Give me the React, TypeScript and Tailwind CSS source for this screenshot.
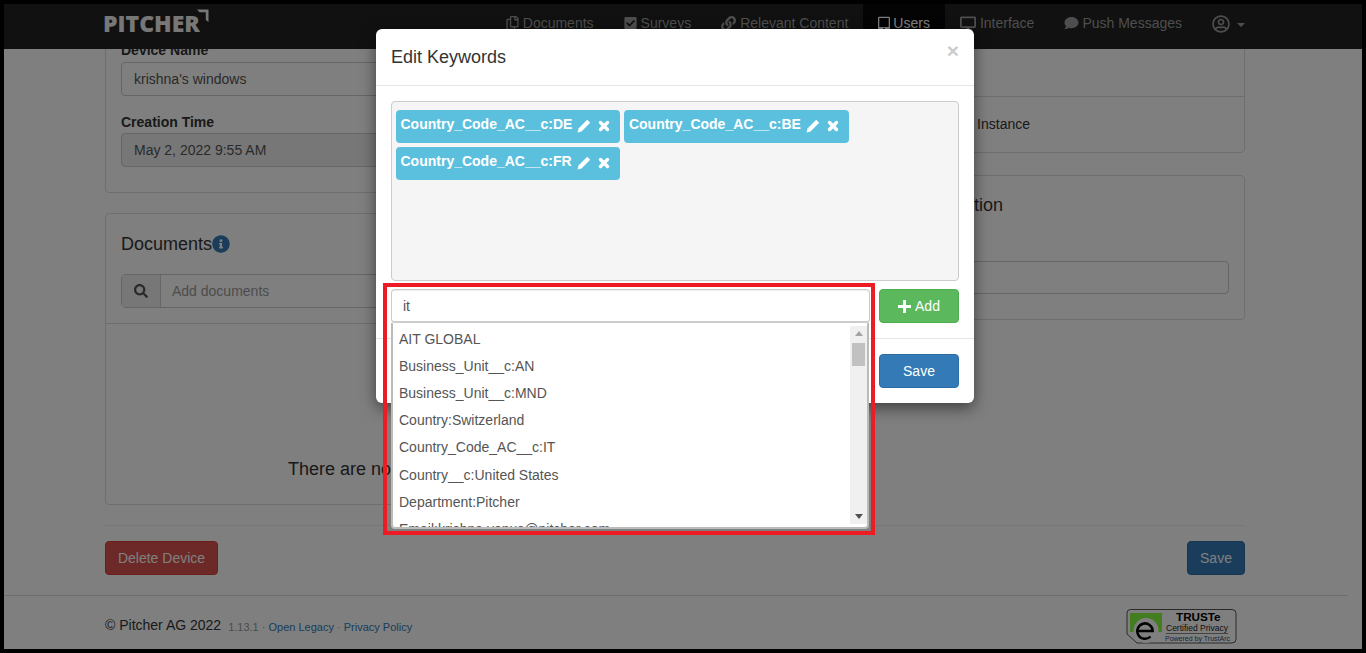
import {
  FaCheckSquare,
  FaComment,
  FaDesktop,
  FaInfoCircle,
  FaLink,
  FaRegCopy,
  FaRegUserCircle,
  FaSearch,
  FaTabletAlt,
} from "react-icons/fa";

const navItems = [
  { label: "Documents", icon: FaRegCopy, iconClass: "h-[14px] w-[13px]", gap: "gap-[4px]" },
  { label: "Surveys", icon: FaCheckSquare, iconClass: "h-[14px] w-[13px]", gap: "gap-[4px]" },
  { label: "Relevant Content", icon: FaLink, iconClass: "h-[15px] w-[15px]", gap: "gap-[4px]" },
  { label: "Users", icon: FaTabletAlt, iconClass: "h-[15px] w-[12px]", gap: "gap-[3px]", active: true },
  { label: "Interface", icon: FaDesktop, iconClass: "h-[15px] w-[16px]", gap: "gap-[4px]" },
  { label: "Push Messages", icon: FaComment, iconClass: "h-[14px] w-[15px]", gap: "gap-[3px]" },
];

const keywords = ["Country_Code_AC__c:DE", "Country_Code_AC__c:BE", "Country_Code_AC__c:FR"];

const suggestions = [
  "AIT GLOBAL",
  "Business_Unit__c:AN",
  "Business_Unit__c:MND",
  "Country:Switzerland",
  "Country_Code_AC__c:IT",
  "Country__c:United States",
  "Department:Pitcher",
  "Email:krishna.venus@pitcher.com",
];

function Logo() {
  return (
    <div className="relative h-[45px] w-[104px] shrink-0">
      <span className="absolute left-[-2px] top-[4px] text-[23px] leading-[30px] font-extrabold text-[#eeeeee] [font-family:'Open_Sans',sans-serif]">
        PITCHER
      </span>
      <svg className="absolute left-[92px] top-[5px]" width="12" height="14" viewBox="0 0 12 14">
        <path d="M0 0.5H11.5V13L8.8 11V3.2H2.5Z" fill="#eeeeee" />
      </svg>
    </div>
  );
}

function Navbar() {
  return (
    <nav className="relative z-10 flex h-[45px] shrink-0 items-center bg-[#222222] pl-[101px] pr-[117px] text-sm text-[#9d9d9d]">
      <Logo />
      <div className="ml-auto flex h-full items-center">
        {navItems.map((item) => (
          <a
            key={item.label}
            className={`flex h-full items-center px-[15px] pb-[7px] ${item.gap} ${item.active ? "bg-[#080808] text-white" : ""}`}
          >
            <item.icon className={item.iconClass} />
            <span>{item.label}</span>
          </a>
        ))}
        <a className="ml-[15px] flex items-center gap-[7px] pb-[5px]">
          <FaRegUserCircle className="h-[18px] w-[18px]" />
          <span className="mt-[2px] h-0 w-0 border-x-[4px] border-t-[4px] border-x-transparent border-t-[#9d9d9d]" />
        </a>
      </div>
    </nav>
  );
}

function Page() {
  return (
    <main className="flex h-[546px] shrink-0 flex-col overflow-hidden px-[101px] pr-[117px] text-sm text-[#333333]">
      <div className="-mt-[23px] grid grid-cols-2 gap-x-5">
        <div className="flex flex-col gap-[20px]">
          <section className="h-[167px] rounded border border-[#dddddd] px-[15px] pt-[13px]">
            <label className="block font-bold leading-5">Device Name</label>
            <div className="mt-[2px] flex h-[34px] items-center rounded border border-[#cccccc] px-3 text-[#555555]">
              krishna's windows
            </div>
            <label className="mt-4 block font-bold leading-5">Creation Time</label>
            <div className="mt-px flex h-[34px] items-center rounded border border-[#cccccc] bg-[#eeeeee] px-3 text-[#555555]">
              May 2, 2022 9:55 AM
            </div>
          </section>
          <section className="flex h-[292px] flex-col rounded border border-[#dddddd]">
            <div className="h-[110px] border-b border-[#dddddd] px-[15px] pt-[20px]">
              <h3 className="flex items-center text-lg leading-5">
                Documents
                <FaInfoCircle className="h-[18px] w-[18px] text-[#337ab7]" />
              </h3>
              <div className="mt-5 flex h-[34px] rounded border border-[#cccccc]">
                <span className="flex w-[39px] items-center justify-center border-r border-[#cccccc] bg-[#eeeeee] text-[#555555]">
                  <FaSearch className="h-[14px] w-[14px]" />
                </span>
                <span className="flex items-center px-[11px] text-[#999999]">Add documents</span>
              </div>
            </div>
            <div className="flex flex-1 items-end justify-center pb-[23px] pl-[2px] text-lg leading-6">
              There are no documents
            </div>
          </section>
        </div>
        <div className="flex flex-col gap-[22px]">
          <section className="h-[127px] rounded border border-[#dddddd]">
            <div className="h-[70px] border-b border-[#dddddd]" />
            <div className="flex h-[56px] items-center justify-end pb-[2px] pr-[214px]">Instance</div>
          </section>
          <section className="h-[145px] rounded border border-[#dddddd] px-[15px] pt-[19px]">
            <h3 className="text-right text-lg leading-5 whitespace-nowrap pr-[226px]">Configuration</h3>
            <div className="mt-[46px] h-[33px] rounded border border-[#cccccc]" />
          </section>
        </div>
      </div>
      <div className="mt-[20px] border-t border-[#eeeeee] pt-[15px]">
        <div className="flex justify-between">
          <button className="h-[34px] w-[113px] rounded border border-[#d43f3a] bg-[#d9534f] text-white">
            Delete Device
          </button>
          <button className="h-[34px] w-[58px] rounded border border-[#2e6da4] bg-[#337ab7] text-white">
            Save
          </button>
        </div>
      </div>
    </main>
  );
}

function TrustBadge() {
  return (
    <svg width="111" height="36" viewBox="0 0 111 36">
      <path
        d="M4.500 .5H106a4 4 0 0 1 4 4V30a4 4 0 0 1-4 4H11L1 25V4a3.500 3.500 0 0 1 3.500-3.500Z"
        fill="#ffffff"
        stroke="#555555"
      />
      <rect x="4" y="4" width="32" height="19" fill="#86fb3e" />
      <circle cx="20" cy="21.500" r="12.500" fill="#ffffff" />
      <path d="M11.500 22H26.700A7.700 7.700 0 1 0 24.500 27.500" fill="none" stroke="#000000" strokeWidth="2.500" />
      <text x="50" y="12" fontSize="11.700" fontWeight="700" fill="#000000" fontFamily="Liberation Sans, sans-serif">
        TRUSTe
      </text>
      <text x="40" y="21.500" fontSize="8.500" fill="#222222" fontFamily="Liberation Sans, sans-serif">
        Certified Privacy
      </text>
      <path d="M40 24.500H102" stroke="#888888" />
      <text x="39" y="32" fontSize="7" fill="#1d4f82" fontFamily="Liberation Sans, sans-serif">
        Powered by TrustArc
      </text>
    </svg>
  );
}

function Footer() {
  return (
    <footer className="mr-[14px] flex flex-1 items-start border-t border-[#dddddd] pl-[101px] pr-[111px]">
      <div className="mt-[19px] flex items-baseline text-sm leading-5 text-[#333333]">
        © Pitcher AG 2022
        <span className="ml-[7px] translate-y-px text-[11px] text-[#999999]">
          1.13.1 · <a className="text-[#337ab7]">Open Legacy</a> · <a className="text-[#337ab7]">Privacy Policy</a>
        </span>
      </div>
      <div className="mt-[13px] ml-auto">
        <TrustBadge />
      </div>
    </footer>
  );
}

function PencilIcon() {
  return (
    <svg width="14" height="14" viewBox="0 0 14 14" className="shrink-0">
      <path d="M10.200 .8L13.200 3.800L4.500 12.500L.6 13.400L1.500 9.500Z" fill="#ffffff" />
    </svg>
  );
}

function RemoveIcon() {
  return (
    <svg width="12" height="12" viewBox="0 0 12 12" className="shrink-0">
      <path d="M2.500 2.500L9.500 9.500M9.500 2.500L2.500 9.500" stroke="#ffffff" strokeWidth="3.400" strokeLinecap="round" />
    </svg>
  );
}

function KeywordChip({ text }: { text: string }) {
  return (
    <span className="flex h-[33px] items-center rounded bg-[#5bc0de] pb-[5px] pl-[4.500px] pr-[10px] text-sm font-bold text-white">
      {text}
      <span className="ml-[5px] mt-[4px] flex items-center gap-[7px]">
        <PencilIcon />
        <RemoveIcon />
      </span>
    </span>
  );
}

function SuggestionList() {
  return (
    <div className="absolute left-[15px] top-[294px] flex h-[206px] w-[478px] overflow-hidden rounded-b border-x-2 border-b-2 border-[#bbbbbb] bg-white text-sm text-[#555555]">
      <ul className="flex-1 overflow-hidden pt-[2px]">
        {suggestions.map((s) => (
          <li key={s} className="flex h-[27.2px] items-center pl-[6px] whitespace-nowrap">
            {s}
          </li>
        ))}
      </ul>
      <div className="relative my-[3px] flex w-[17px] shrink-0 flex-col items-center bg-[#f0f0f0]">
        <span className="mt-[5px] h-0 w-0 border-x-[4px] border-b-[5px] border-x-transparent border-b-[#a3a3a3]" />
        <span className="mt-[7px] h-[23px] w-[13px] bg-[#c1c1c1]" />
        <span className="mt-auto mb-[5px] h-0 w-0 border-x-[4px] border-t-[5px] border-x-transparent border-t-[#505050]" />
      </div>
    </div>
  );
}

function KeywordsModal() {
  return (
    <div className="absolute left-[376px] top-[29px] z-30 w-[598px] rounded-md bg-white text-sm text-[#333333] shadow-[0_5px_15px_rgba(0,0,0,0.5)]">
      <div className="relative h-[57px] border-b border-[#e5e5e5] px-[15px] pt-[15px]">
        <h4 className="text-lg leading-[26px]">Edit Keywords</h4>
        <span className="absolute right-[15px] top-[9px] text-[21px] leading-[26px] font-bold text-[#cccccc]">×</span>
      </div>
      <div className="p-[15px]">
        <div className="flex h-[180px] flex-wrap content-start gap-1 rounded border border-[#cccccc] bg-[#f5f5f5] pl-1 pt-2">
          {keywords.map((k) => (
            <KeywordChip key={k} text={k} />
          ))}
        </div>
        <div className="mt-2 flex justify-between">
          <div className="flex h-[34px] w-[479px] items-center rounded border border-b-2 border-[#cccccc] bg-white px-[11px] text-[#555555] shadow-[inset_0_1px_1px_rgba(0,0,0,0.075)]">
            it
          </div>
          <button className="flex h-[34px] w-[80px] items-center justify-center gap-[4px] rounded border border-[#4cae4c] bg-[#5cb85c] text-white">
            <svg width="13" height="13" viewBox="0 0 13 13" className="shrink-0">
              <path d="M5 0H8V5H13V8H8V13H5V8H0V5H5Z" fill="#ffffff" />
            </svg>
            Add
          </button>
        </div>
      </div>
      <div className="flex justify-end border-t border-[#e5e5e5] p-[15px]">
        <button className="h-[34px] w-[80px] rounded border border-[#2e6da4] bg-[#337ab7] text-white">Save</button>
      </div>
      <SuggestionList />
    </div>
  );
}

export default function App() {
  return (
    <div className="relative h-[653px] w-[1366px] overflow-hidden bg-black p-1 [font-family:'Liberation_Sans',Arial,sans-serif]">
      <div className="flex h-full flex-col bg-white">
        <Navbar />
        <Page />
        <Footer />
      </div>
      {/* backdrop sits over the page, inside the black frame */}
      <div className="absolute inset-1 z-20 bg-black/50" />
      <KeywordsModal />
      {/* red annotation box round the search field and its list */}
      <div className="absolute left-[383px] top-[283px] z-40 h-[252px] w-[492px] border-[4.500px] border-[#ed1c24]" />
    </div>
  );
}
